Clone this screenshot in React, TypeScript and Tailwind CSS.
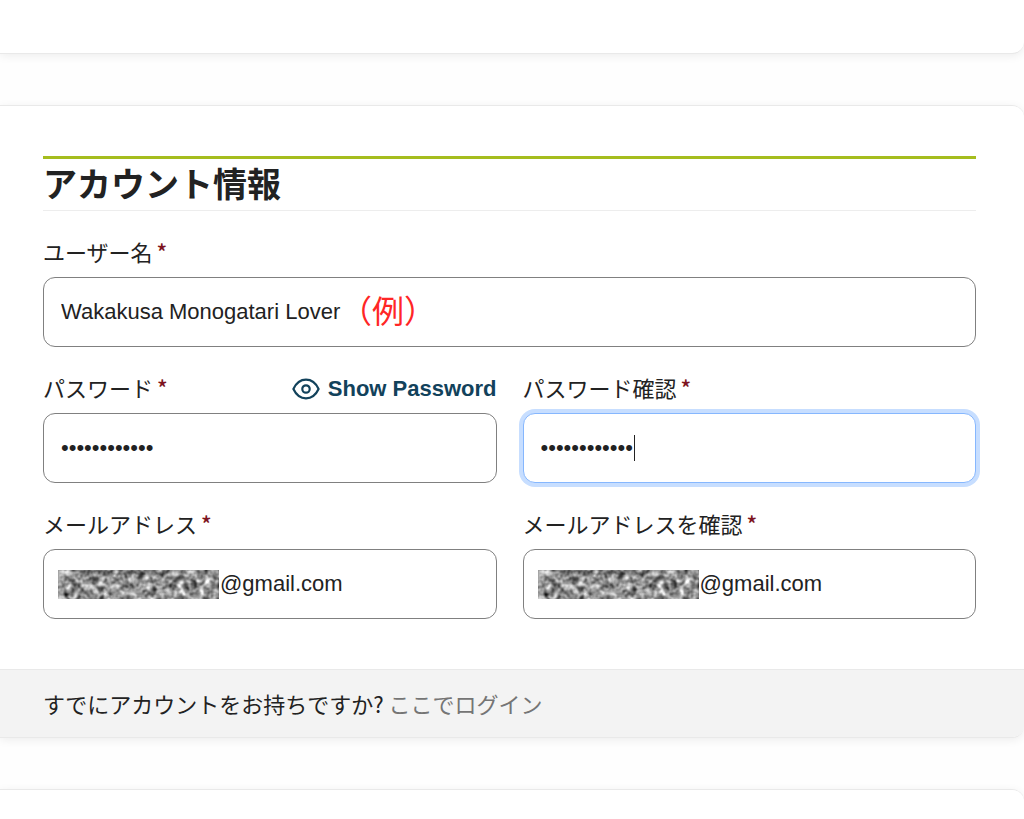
import type { ComponentProps, ReactNode } from "react";

const inputClass =
  "block h-[70px] w-full rounded-xl border bg-white px-[17px] font-['Liberation_Sans','Noto_Sans_CJK_JP',sans-serif] text-[22px] text-[#222] outline-none";

function EyeIcon({ className }: { className?: string }) {
  return (
    <svg
      viewBox="0 0 28 22"
      fill="none"
      stroke="currentColor"
      strokeWidth="2.2"
      strokeLinejoin="round"
      aria-hidden="true"
      className={className}
    >
      <path d="M1.4 11C4.2 5 8.8 1.7 14 1.7S23.8 5 26.6 11C23.8 17 19.2 20.3 14 20.3S4.2 17 1.4 11Z" />
      <circle cx="14" cy="11" r="3.7" />
    </svg>
  );
}

/* grey noise that hides the first part of an address */
function Redaction({ id }: { id: string }) {
  return (
    <svg
      aria-hidden="true"
      className="pointer-events-none absolute top-[21px] left-[15px] h-[29px] w-[161px]"
    >
      <filter id={id} x="0" y="0" width="100%" height="100%" colorInterpolationFilters="sRGB">
        <feTurbulence type="fractalNoise" baseFrequency="0.15" numOctaves="2" seed="8" />
        <feColorMatrix values="1 0.7 0 0 -0.28  1 0.7 0 0 -0.28  1 0.7 0 0 -0.28  0 0 0 0 1" />
      </filter>
      <rect width="161" height="29" fill="#808080" filter={`url(#${id})`} />
    </svg>
  );
}

function Field({
  id,
  label,
  action,
  focused,
  indent,
  children,
  ...props
}: ComponentProps<"input"> & {
  id: string;
  label: string;
  action?: ReactNode;
  focused?: boolean;
  indent?: boolean;
}) {
  return (
    <div className="min-w-0">
      <div className="flex h-10 items-start justify-between">
        <label htmlFor={id} className="flex gap-1 text-[22px] leading-7 whitespace-nowrap text-[#222]">
          {label}
          <span className="font-medium text-[#7d1420]">*</span>
        </label>
        {action}
      </div>
      <div className="relative">
        <input
          id={id}
          className={`${inputClass} ${
            focused
              ? "border-[#86b7fe] caret-transparent ring-4 ring-[#c7deff]"
              : "border-[#808080]"
          } ${indent ? "pl-[176px]" : ""}`}
          {...props}
        />
        {children}
      </div>
    </div>
  );
}

export default function App() {
  return (
    <div className="flex min-h-screen flex-col gap-[51px] overflow-hidden bg-[#fefefe] font-['Noto_Sans_CJK_JP',sans-serif] text-[#222]">
      <section className="h-[54px] rounded-br-xl border-b border-[#e9e9e9] bg-white shadow-[0_2px_10px_rgba(0,0,0,0.07)]" />

      <section className="overflow-hidden rounded-r-xl border-y border-[#e9e9e9] bg-white shadow-[0_2px_10px_rgba(0,0,0,0.07)]">
        <form className="pt-[50px] pr-12 pb-[50px] pl-[43px]">
          <h2 className="border-t-3 border-b border-t-[#a5bd1e] border-b-[#ededed] pb-[3px] text-[34px] leading-[48px] font-bold">
            アカウント情報
          </h2>
          <div className="mt-[26px] grid grid-cols-2 gap-[26px]">
            <div className="col-span-2">
              <Field id="username" label="ユーザー名" defaultValue="Wakakusa Monogatari Lover">
                <span className="pointer-events-none absolute top-2 left-[297px] text-[32px] leading-[48px] text-[#ff2626]">
                  （例）
                </span>
              </Field>
            </div>
            <Field
              id="password"
              label="パスワード"
              type="password"
              defaultValue="wakakusa2024"
              action={
                <button
                  type="button"
                  className="flex items-center gap-2 font-['Liberation_Sans',sans-serif] text-[22px] leading-8 font-bold whitespace-nowrap text-[#12425b]"
                >
                  <EyeIcon className="h-[22px] w-7" />
                  Show Password
                </button>
              }
            />
            <Field
              id="password2"
              label="パスワード確認"
              type="password"
              defaultValue="wakakusa2024"
              focused
            >
              <span className="absolute top-[22px] left-[111px] h-[26px] w-px bg-[#222]" />
            </Field>
            <Field id="email" label="メールアドレス" defaultValue="@gmail.com" indent>
              <Redaction id="noise-email" />
            </Field>
            <Field id="email2" label="メールアドレスを確認" defaultValue="@gmail.com" indent>
              <Redaction id="noise-email2" />
            </Field>
          </div>
        </form>
        <footer className="border-t border-[#e9e9e9] bg-[#f3f3f3] pt-[17px] pb-[18px] pl-[43px] text-[22px] leading-8">
          すでにアカウントをお持ちですか?{" "}
          <a href="#login" className="text-[#757575]">
            ここでログイン
          </a>
        </footer>
      </section>

      <section className="flex-1 rounded-tr-xl border-t border-[#e9e9e9] bg-white shadow-[0_2px_10px_rgba(0,0,0,0.07)]" />
    </div>
  );
}
